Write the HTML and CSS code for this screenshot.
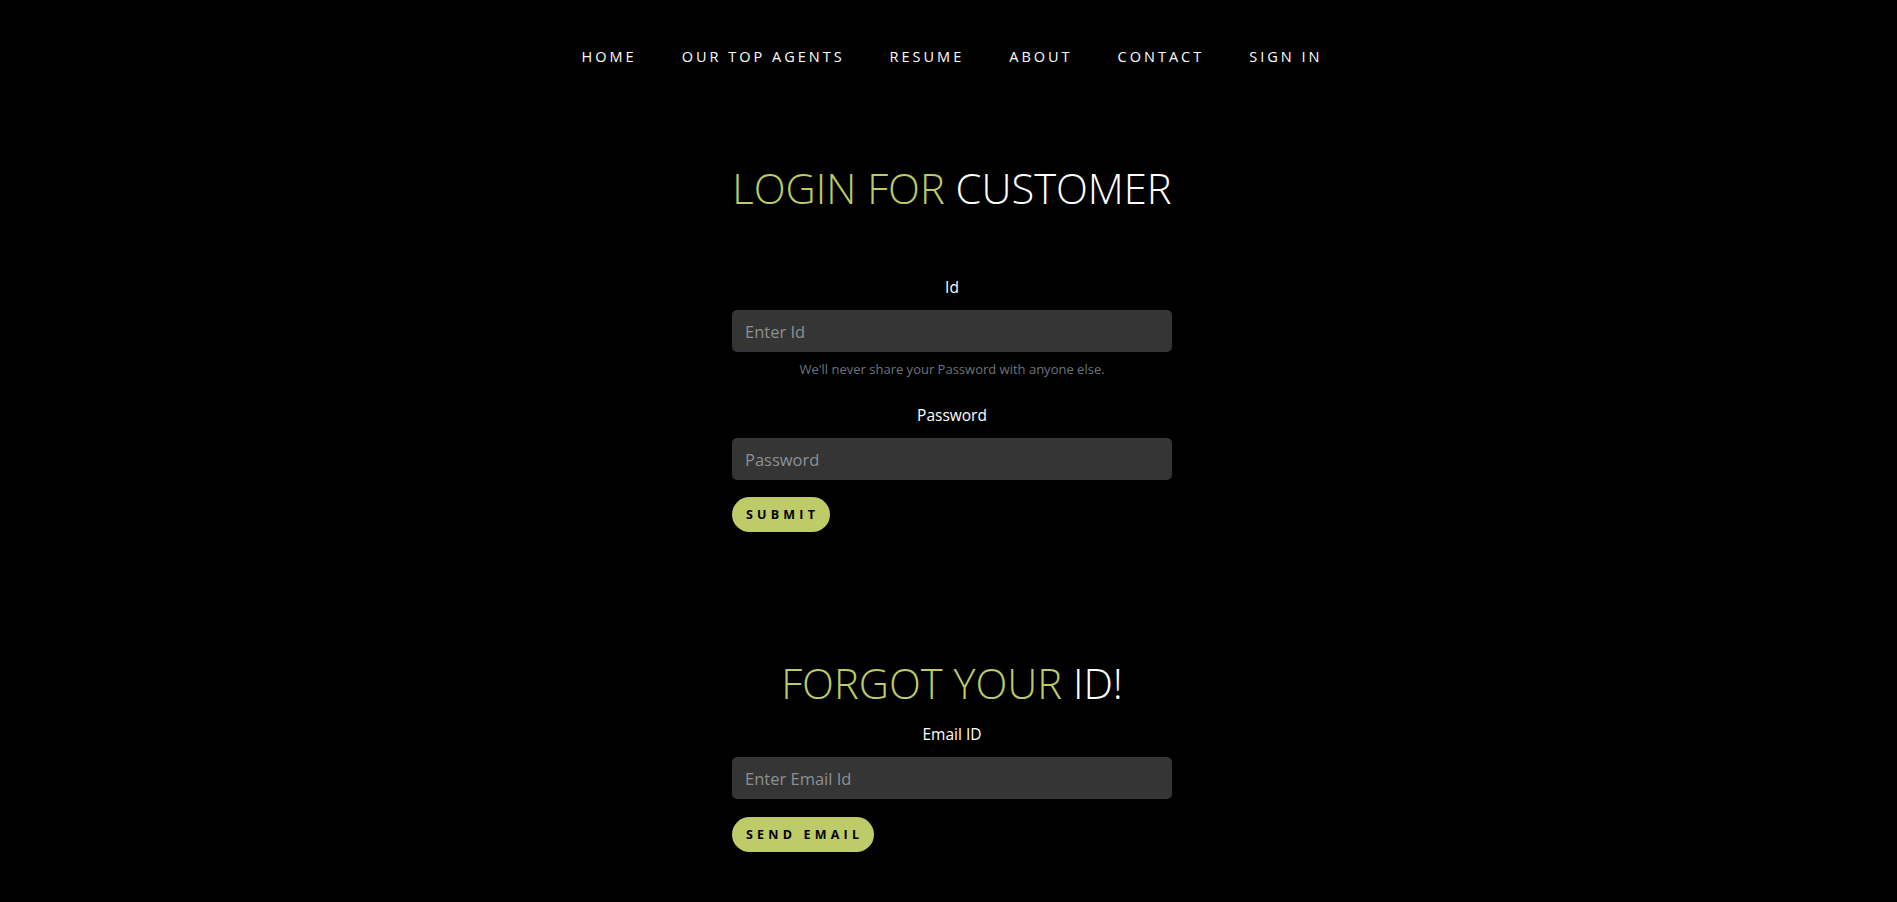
FILE: index.html
```html
<!DOCTYPE html>
<html lang="en">
<head>
<meta charset="utf-8">
<title>Login for Customer</title>
<link rel="stylesheet" href="styles.css">
</head>
<body>
<nav class="nav">
  <ul class="nav-list">
    <li><a href="#" class="nav-link">Home</a></li>
    <li><a href="#" class="nav-link">Our Top Agents</a></li>
    <li><a href="#" class="nav-link">Resume</a></li>
    <li><a href="#" class="nav-link">About</a></li>
    <li><a href="#" class="nav-link">Contact</a></li>
    <li><a href="#" class="nav-link">Sign In</a></li>
  </ul>
</nav>
<main class="wrap">
  <section class="login">
    <h2 class="title"><span class="accent">LOGIN FOR</span> CUSTOMER</h2>
    <form class="form">
      <label class="label" for="cid">Id</label>
      <input class="field" id="cid" type="text" placeholder="Enter Id">
      <small class="help">We'll never share your Password with anyone else.</small>
      <label class="label label-pw" for="pw">Password</label>
      <input class="field" id="pw" type="password" placeholder="Password">
      <button class="btn" type="button">Submit</button>
    </form>
  </section>
  <section class="forgot">
    <h2 class="title"><span class="accent">FORGOT YOUR</span> ID!</h2>
    <form class="form">
      <label class="label label-email" for="em">Email ID</label>
      <input class="field" id="em" type="email" placeholder="Enter Email Id">
      <button class="btn" type="button">Send Email</button>
    </form>
  </section>
</main>
</body>
</html>
```
FILE: styles.css
```css
* { box-sizing: border-box; }
html, body { margin: 0; padding: 0; }
body {
  background: #000;
  color: #fff;
  font-family: "Open Sans", "Noto Sans", sans-serif;
  min-height: 902px;
  padding-left: 7px;
}
.nav { padding-top: 47px; }
.nav-list {
  list-style: none;
  margin: 0;
  padding: 0;
  display: flex;
  justify-content: center;
}
.nav-link {
  display: block;
  padding: 0 22.5px;
  color: #fff;
  text-decoration: none;
  text-transform: uppercase;
  font-size: 14.5px;
  line-height: 20px;
  letter-spacing: 3px;
}
.wrap {
  width: 440px;
  margin: 0 auto;
}
.title {
  margin: 0;
  text-align: center;
  font-weight: 300;
  font-size: 41.7px;
  line-height: 52px;
  color: #fff;
  white-space: nowrap;
}
.accent { color: #bccb65; }
.login .title { margin-top: 95px; }
.form { display: flex; flex-direction: column; }
.label {
  text-align: center;
  font-size: 15.5px;
  line-height: 24px;
  margin-bottom: 11px;
  font-weight: 400;
}
.login .label:first-child { margin-top: 61px; }
.label-pw { margin-top: 24px; }
.label-email { margin-top: 13px; }
.field {
  display: block;
  width: 100%;
  height: 42px;
  background: #353535;
  border: none;
  border-radius: 5px;
  padding: 0 13px;
  color: #ddd;
  font-family: inherit;
  font-size: 16.5px;
  outline: none;
}
.field::placeholder { color: #8c9095; }
.help {
  display: block;
  margin-top: 7px;
  text-align: center;
  font-size: 13px;
  line-height: 20px;
  color: #6c757d;
}
.btn {
  align-self: flex-start;
  margin-top: 17px;
  height: 35px;
  padding: 0 11px 0 14px;
  border: none;
  border-radius: 18px;
  background: #bdcb69;
  color: #000;
  font-family: inherit;
  font-weight: 700;
  font-size: 12.5px;
  letter-spacing: 4.2px;
  text-transform: uppercase;
  cursor: pointer;
}
.forgot .title { margin-top: 125px; }
.forgot .btn { margin-top: 18px; }
```
